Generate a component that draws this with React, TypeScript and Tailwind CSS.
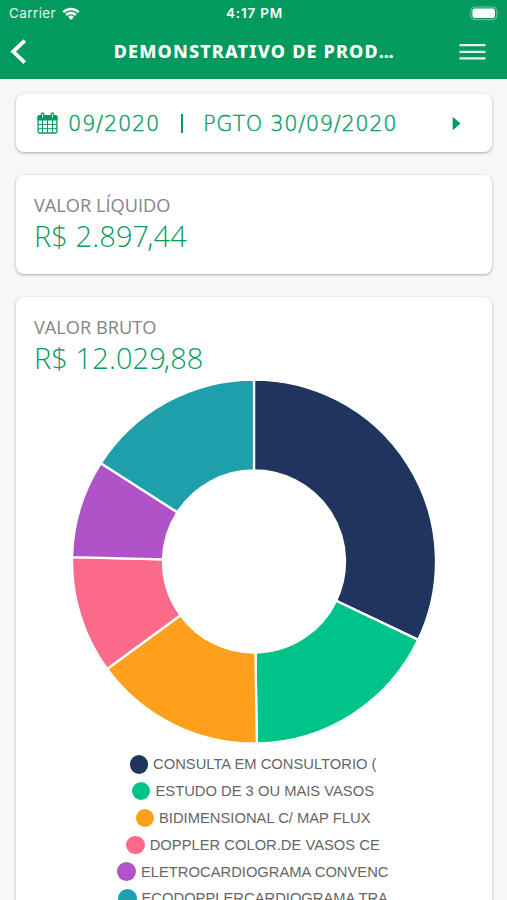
import { ReactNode } from "react";

const slices = [
  { label: "CONSULTA EM CONSULTORIO (", color: "#1f355e", start: 0, end: 115.5 },
  { label: "ESTUDO DE 3 OU MAIS VASOS", color: "#00c389", start: 115.5, end: 179.1 },
  { label: "BIDIMENSIONAL C/ MAP FLUX", color: "#ffa01c", start: 179.1, end: 233.8 },
  { label: "DOPPLER COLOR.DE VASOS CE", color: "#fb6a88", start: 233.8, end: 271.4 },
  { label: "ELETROCARDIOGRAMA CONVENC", color: "#b153c8", start: 271.4, end: 302.7 },
  { label: "ECODOPPLERCARDIOGRAMA TRA", color: "#1f9fab", start: 302.7, end: 360 },
];

const OUTER = 182;
const INNER = 91;

function point(radius: number, angle: number) {
  const rad = (angle * Math.PI) / 180;
  return `${183 + radius * Math.sin(rad)} ${183.5 - radius * Math.cos(rad)}`;
}

function arc(start: number, end: number) {
  return [
    `M${point(OUTER, start)}`,
    `A${OUTER} ${OUTER} 0 0 1 ${point(OUTER, end)}`,
    `L${point(INNER, end)}`,
    `A${INNER} ${INNER} 0 0 0 ${point(INNER, start)}Z`,
  ].join(" ");
}

function Card({ className, children }: { className: string; children: ReactNode }) {
  return (
    <section
      className={`rounded-[8px] bg-white shadow-[0_1px_3px_rgba(0,0,0,0.32)] ${className}`}
    >
      {children}
    </section>
  );
}

function CalendarIcon() {
  return (
    <svg className="h-[22px] w-[21px]" viewBox="0 0 21 22" fill="none">
      <path d="M.5 5q0-2 2-2h16q2 0 2 2v3.5H.5Z" fill="#079a60" />
      <rect x="1.1" y="4" width="18.8" height="17" rx="1.2" stroke="#079a60" strokeWidth="1.3" />
      <path d="M5.5 8v13M10.5 8v13M15.5 8v13M1 12.4h19M1 16.7h19" stroke="#079a60" strokeWidth="1" />
      <rect x="4.4" y="0.8" width="2.4" height="5.4" rx="1.2" fill="#dff3ea" stroke="#079a60" strokeWidth="1.3" />
      <rect x="14.2" y="0.8" width="2.4" height="5.4" rx="1.2" fill="#dff3ea" stroke="#079a60" strokeWidth="1.3" />
    </svg>
  );
}

function StatusBar() {
  return (
    <div className="grid h-[27px] grid-cols-3 items-center pl-[9px] pr-[7px] font-['Inter',sans-serif] text-[13px]">
      <div className="flex items-center gap-[6px]">
        <span className="w-[47px] whitespace-nowrap text-[13.5px] tracking-[0.4px] text-white/90">Carrier</span>
        <svg className="h-[15px] w-[18px]" viewBox="0 0 18 15">
          <path d="M0.4 5.2a12.3 12.3 0 0 1 17.2 0l-1.7 1.8a9.8 9.8 0 0 0-13.8 0Z" fill="white" />
          <path d="M3.3 8.1a8.2 8.2 0 0 1 11.4 0l-1.8 1.8a5.6 5.6 0 0 0-7.8 0Z" fill="white" />
          <path d="M6.1 11a4.1 4.1 0 0 1 5.8 0L9 14Z" fill="white" />
        </svg>
      </div>
      <div className="whitespace-nowrap text-center text-[13.5px] font-semibold tracking-[0.8px]">4:17 PM</div>
      <svg className="h-[15px] w-[30px] justify-self-end" viewBox="0 0 30 15">
        <rect x="0.8" y="1" width="26" height="12.7" rx="3.8" fill="none" stroke="white" strokeOpacity="0.45" />
        <rect x="2.4" y="2.6" width="22.6" height="9.5" rx="2.3" fill="white" />
        <path d="M28.2 5.3q1.6 2 0 4Z" fill="white" fillOpacity="0.55" />
      </svg>
    </div>
  );
}

export default function App() {
  return (
    <div className="flex h-[900px] w-[507px] flex-col overflow-hidden bg-[#f7f7f7] font-['Open_Sans',sans-serif] text-[#079a60]">
      <header className="h-[79px] shrink-0 bg-[#029a5d] text-white">
        <StatusBar />
        <div className="flex h-[49px] items-center justify-between pl-[10px] pr-[21px]">
          <svg className="h-[26px] w-[17px]" viewBox="0 0 17 26" fill="none">
            <path d="M14.8 1.6 3.2 12.6l11.6 11" stroke="white" strokeWidth="3.8" />
          </svg>
          <h1 className="ml-[21px] whitespace-nowrap font-['Noto_Sans',sans-serif] text-[18px] font-extrabold tracking-[1.15px]">
            DEMONSTRATIVO DE PROD<span className="tracking-[-0.3px]">...</span>
          </h1>
          <svg className="h-[18px] w-[27px]" viewBox="0 0 27 18">
            <path d="M.5 2.2h26M.5 8.8h26M.5 15.4h26" stroke="white" strokeOpacity="0.9" strokeWidth="2.2" />
          </svg>
        </div>
      </header>

      <main className="flex flex-col pl-[16px] pr-[15px] pt-[15px]">
        <Card className="flex h-[58px] items-center pl-[21px] pr-[31px] font-['DejaVu_Sans',sans-serif] text-[21px]">
          <CalendarIcon />
          <span className="ml-[10px] w-[106px] whitespace-nowrap pt-[3px] font-extralight tracking-[0.7px] [-webkit-text-stroke:0.4px_#079a60]">
            09/2020
          </span>
          <span className="mx-[7px] mt-px h-[19px] w-[2px] bg-[#079a60]" />
          <span className="ml-[13px] grow whitespace-nowrap pt-[3px] font-extralight tracking-[0.6px] [-webkit-text-stroke:0.4px_#079a60]">
            PGTO 30/09/2020
          </span>
          <svg className="h-[15px] w-[9px]" viewBox="0 0 9 15">
            <path d="M0.7.8 8.5 7.5.7 14.2Z" fill="#079a60" />
          </svg>
        </Card>

        <Card className="mt-[23px] h-[99px] px-[18px] pt-[17px]">
          <h2 className="text-[18.2px] leading-[27px] text-[#858585]">VALOR LÍQUIDO</h2>
          <p className="text-[29px] font-light leading-[34px] tracking-[0.1px]">
            R$ 2.89<span className="tracking-[-2px]">7</span>,44
          </p>
        </Card>

        <Card className="mt-[23px] h-[640px] px-[18px] pt-[17px]">
          <h2 className="text-[18.2px] leading-[27px] text-[#858585]">VALOR BRUTO</h2>
          <p className="text-[29px] font-light leading-[34px] tracking-[0.1px]">
            R$ 12.02<span className="tracking-[-2px]">9</span>,88
          </p>
          <svg className="mx-auto mt-[3px] h-[367px] w-[366px]" viewBox="0 0 366 367">
            {slices.map((slice) => (
              <path
                key={slice.label}
                d={arc(slice.start, slice.end)}
                fill={slice.color}
                stroke="white"
                strokeWidth="2.3"
              />
            ))}
          </svg>
          <ul className="mt-[6px] pr-[2px] font-['Liberation_Sans',sans-serif] text-[14.75px] text-[#666]">
            {slices.map((slice) => (
              <li key={slice.label} className="flex h-[26.8px] items-center justify-center gap-[5px] whitespace-nowrap">
                <span className="size-[18.5px] rounded-full" style={{ backgroundColor: slice.color }} />
                <span>{slice.label}</span>
              </li>
            ))}
          </ul>
        </Card>
      </main>
    </div>
  );
}
